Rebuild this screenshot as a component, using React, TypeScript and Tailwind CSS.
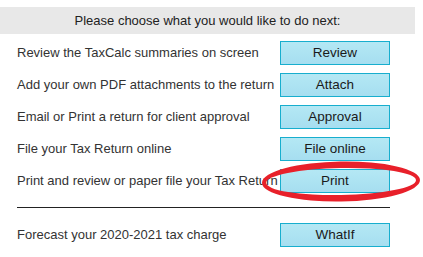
const rows = [
  { text: "Review the TaxCalc summaries on screen", btn: "Review" },
  { text: "Add your own PDF attachments to the return", btn: "Attach" },
  { text: "Email or Print a return for client approval", btn: "Approval" },
  { text: "File your Tax Return online", btn: "File online" },
  { text: "Print and review or paper file your Tax Return", btn: "Print" },
];

const ActionButton = ({ label }: { label: string }) => (
  <div className="w-[110px] h-[24px] shrink-0 flex items-center justify-center border border-[#17aece] bg-gradient-to-b from-[#b4e8f4] to-[#a6def0] text-[13.5px] text-[#1a1a1a]">
    {label}
  </div>
);

// outer ellipse minus inner ellipse -> ring thicker at top/bottom than at the sides
const ring = (cx: number, cy: number, rx: number, ry: number, ix: number, iy: number) =>
  `M${cx - rx},${cy} a${rx},${ry} 0 1,0 ${rx * 2},0 a${rx},${ry} 0 1,0 ${-rx * 2},0 Z ` +
  `M${cx - ix},${cy} a${ix},${iy} 0 1,0 ${ix * 2},0 a${ix},${iy} 0 1,0 ${-ix * 2},0 Z`;

const App = () => {
  return (
    <div className="relative w-[423px] h-[257px] bg-white font-['Liberation_Sans',Arial,sans-serif] text-[13px] text-[#333]">
      <div className="pt-[7px] w-[415px]">
        <div className="h-[27px] bg-[#e8e8e8] flex items-center justify-center text-[13px] text-[#222]">
          Please choose what you would like to do next:
        </div>
      </div>

      <div className="pl-[17px] w-[390px] pt-[7px] flex flex-col gap-[8px]">
        {rows.map((r) => (
          <div key={r.btn} className="flex items-center justify-between h-[24px]">
            <span className="whitespace-nowrap">{r.text}</span>
            <ActionButton label={r.btn} />
          </div>
        ))}
        <div className="mt-[6px] h-px bg-[#222]" />
        <div className="mt-[7px] flex items-center justify-between h-[24px]">
          <span>Forecast your 2020-2021 tax charge</span>
          <ActionButton label="WhatIf" />
        </div>
      </div>

      {/* red marker ring drawn over the Print button */}
      <svg className="absolute left-0 top-0 pointer-events-none" width="423" height="257">
        <path
          d={ring(341, 181.5, 79, 20, 75, 13.5)}
          transform="rotate(-1 341 181.5)"
          fill="#e8202a"
          fillRule="evenodd"
        />
      </svg>
    </div>
  );
};

export default App;
